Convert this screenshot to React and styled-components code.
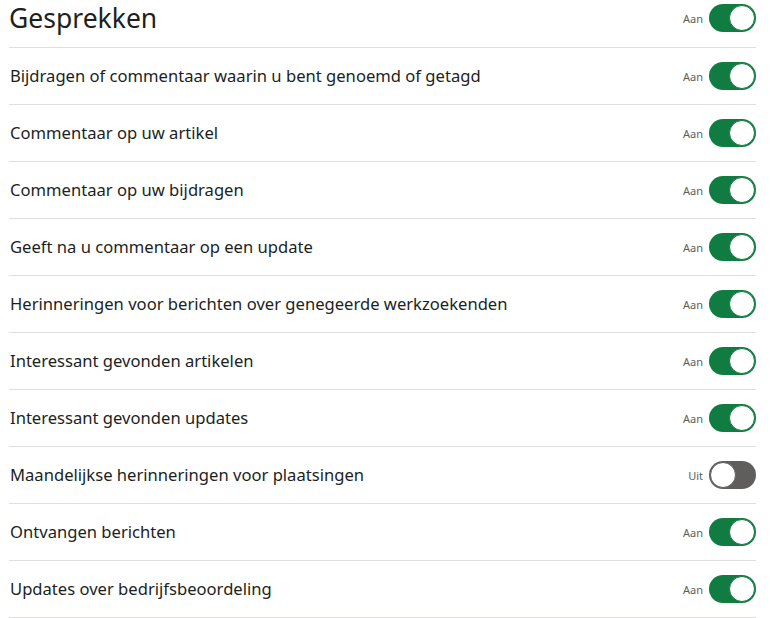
import React, { useState } from 'react'
import styled, { createGlobalStyle } from 'styled-components'

const GlobalStyle = createGlobalStyle`
  body {
    margin: 0;
    background: #ffffff;
    font-family: "Noto Sans", "Open Sans", sans-serif;
    color: #201f1e;
  }
`

const Page = styled.div`
  width: 747px;
  padding: 0 14px 0 9px;
`

const Header = styled.div`
  display: flex;
  align-items: center;
  justify-content: space-between;
  height: 36px;
  padding-bottom: 11px;
  border-bottom: 1px solid #e1dfdd;
`

const Title = styled.h1`
  margin: 0;
  font-size: 26.5px;
  font-weight: 400;
  color: #201f1e;
`

const Row = styled.div`
  display: flex;
  align-items: center;
  justify-content: space-between;
  height: 56px;
  border-bottom: 1px solid #e1dfdd;
`

const Label = styled.span`
  font-size: 16.6px;
  padding-left: 1px;
  padding-bottom: 1px;
`

const Control = styled.label`
  display: flex;
  align-items: center;
  gap: 6px;
  cursor: pointer;
`

const State = styled.span`
  font-size: 11px;
  color: #605e5c;
`

const Track = styled.span`
  position: relative;
  display: block;
  width: 47px;
  height: 28px;
  border-radius: 14px;
  box-sizing: border-box;
  background: ${p => (p.on ? '#107c41' : '#605e5c')};
`

const Knob = styled.span`
  position: absolute;
  top: 1px;
  left: ${p => (p.on ? '20px' : '1px')};
  width: 26px;
  height: 26px;
  border-radius: 50%;
  box-sizing: border-box;
  background: #ffffff;
  border: 1.5px solid ${p => (p.on ? '#107c41' : '#605e5c')};
`

function Toggle({ on, onClick }) {
  return (
    <Control onClick={onClick}>
      <State>{on ? 'Aan' : 'Uit'}</State>
      <Track on={on ? 1 : 0}>
        <Knob on={on ? 1 : 0} />
      </Track>
    </Control>
  )
}

const items = [
  ['Bijdragen of commentaar waarin u bent genoemd of getagd', true],
  ['Commentaar op uw artikel', true],
  ['Commentaar op uw bijdragen', true],
  ['Geeft na u commentaar op een update', true],
  ['Herinneringen voor berichten over genegeerde werkzoekenden', true],
  ['Interessant gevonden artikelen', true],
  ['Interessant gevonden updates', true],
  ['Maandelijkse herinneringen voor plaatsingen', false],
  ['Ontvangen berichten', true],
  ['Updates over bedrijfsbeoordeling', true],
]

export default function App() {
  const [all, setAll] = useState(true)
  const [values, setValues] = useState(items.map(i => i[1]))

  const flip = idx => setValues(v => v.map((x, i) => (i === idx ? !x : x)))

  return (
    <Page>
      <GlobalStyle />
      <Header>
        <Title>Gesprekken</Title>
        <Toggle on={all} onClick={() => setAll(!all)} />
      </Header>
      {items.map((item, i) => (
        <Row key={item[0]}>
          <Label>{item[0]}</Label>
          <Toggle on={values[i]} onClick={() => flip(i)} />
        </Row>
      ))}
    </Page>
  )
}
